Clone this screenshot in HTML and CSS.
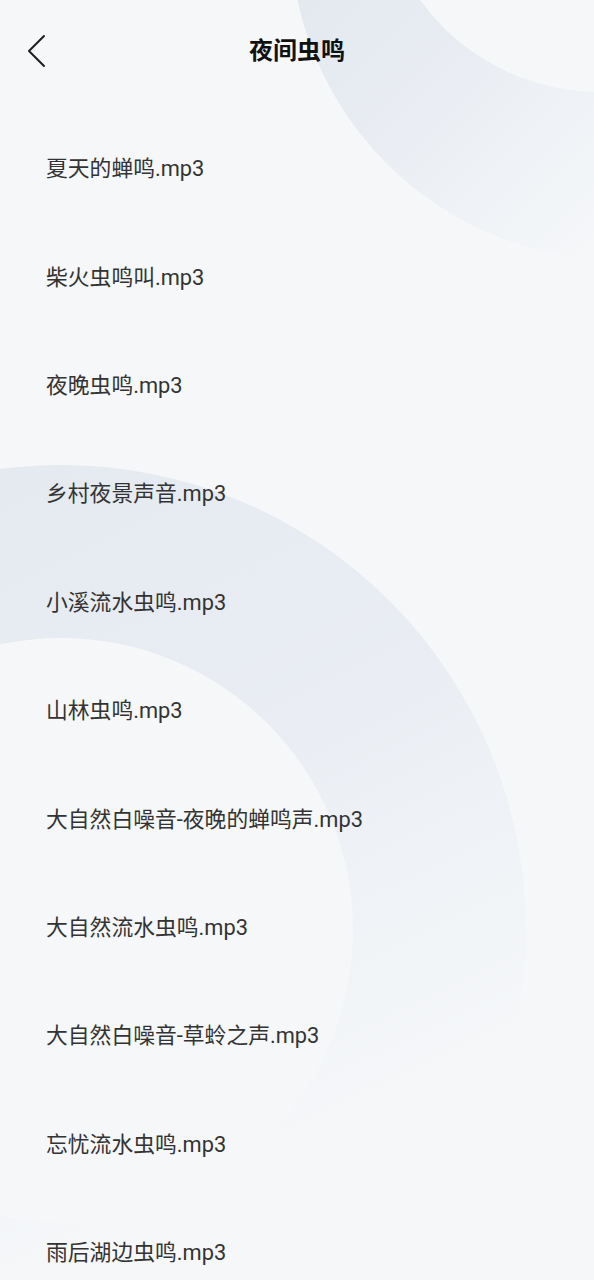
FILE: index.html
```html
<!DOCTYPE html>
<html lang="zh-CN">
<head>
<meta charset="utf-8">
<title>夜间虫鸣</title>
<link rel="stylesheet" href="styles.css">
</head>
<body>
<div class="page">
  <svg class="bg-deco" viewBox="0 0 594 1280" width="594" height="1280" aria-hidden="true">
    <defs>
      <linearGradient id="gTop" gradientUnits="userSpaceOnUse" x1="300" y1="0" x2="570" y2="270">
        <stop offset="0" stop-color="#e4e9f0"/>
        <stop offset="0.35" stop-color="#e8ecf2"/>
        <stop offset="1" stop-color="#f5f7f9"/>
      </linearGradient>
      <linearGradient id="gBottom" gradientUnits="userSpaceOnUse" x1="0" y1="470" x2="320" y2="1130">
        <stop offset="0" stop-color="#e5eaf1"/>
        <stop offset="0.45" stop-color="#e9edf3"/>
        <stop offset="1" stop-color="#f5f7f9"/>
      </linearGradient>
    </defs>
    <path fill="url(#gTop)" fill-rule="evenodd"
      d="M290,-70 a330,330 0 1,0 660,0 a330,330 0 1,0 -660,0 Z
         M378,-130 a222,222 0 1,0 444,0 a222,222 0 1,0 -444,0 Z"/>
    <path fill="url(#gBottom)" fill-rule="evenodd"
      d="M-404,930 a465,465 0 1,0 930,0 a465,465 0 1,0 -930,0 Z
         M-231,930 a292,292 0 1,0 584,0 a292,292 0 1,0 -584,0 Z"/>
  </svg>

  <header class="topbar">
    <div class="topbar-left">
      <svg class="back-icon" width="20" height="34" viewBox="0 0 20 34" aria-hidden="true">
        <path d="M18 2 L3 17 L18 32" fill="none" stroke="#1f1f1f" stroke-width="2" stroke-linecap="round" stroke-linejoin="round"/>
      </svg>
    </div>
    <h1 class="title">夜间虫鸣</h1>
    <div class="topbar-right"></div>
  </header>

  <ul class="track-list">
    <li class="track">夏天的蝉鸣.mp3</li>
    <li class="track">柴火虫鸣叫.mp3</li>
    <li class="track">夜晚虫鸣.mp3</li>
    <li class="track">乡村夜景声音.mp3</li>
    <li class="track">小溪流水虫鸣.mp3</li>
    <li class="track">山林虫鸣.mp3</li>
    <li class="track">大自然白噪音-夜晚的蝉鸣声.mp3</li>
    <li class="track">大自然流水虫鸣.mp3</li>
    <li class="track">大自然白噪音-草蛉之声.mp3</li>
    <li class="track">忘忧流水虫鸣.mp3</li>
    <li class="track">雨后湖边虫鸣.mp3</li>
  </ul>
</div>
</body>
</html>
```

FILE: styles.css
```css
* {
  box-sizing: border-box;
}

html, body {
  margin: 0;
  padding: 0;
  background: #f5f7f9;
}

body {
  font-family: "Roboto", "Noto Sans CJK SC", "Noto Sans", sans-serif;
  color: #333333;
}

.page {
  position: relative;
  width: 594px;
  height: 1280px;
  overflow: hidden;
  background: #f5f7f9;
}

.bg-deco {
  position: absolute;
  left: 0;
  top: 0;
  z-index: 0;
  display: block;
}

.topbar {
  position: relative;
  z-index: 1;
  height: 102px;
  display: grid;
  grid-template-columns: 1fr auto 1fr;
  align-items: center;
}

.topbar-left {
  display: flex;
  align-items: center;
  padding-left: 26px;
}

.back-icon {
  display: block;
}

.title {
  margin: 0;
  font-size: 24px;
  font-weight: 700;
  color: #111111;
  line-height: 1;
}

.track-list {
  position: relative;
  z-index: 1;
  list-style: none;
  margin: 13px 0 0 0;
  padding: 0;
}

.track {
  height: 108.4px;
  display: flex;
  align-items: center;
  padding-left: 46px;
  font-size: 21.8px;
  color: #333333;
  line-height: 1;
}
```
